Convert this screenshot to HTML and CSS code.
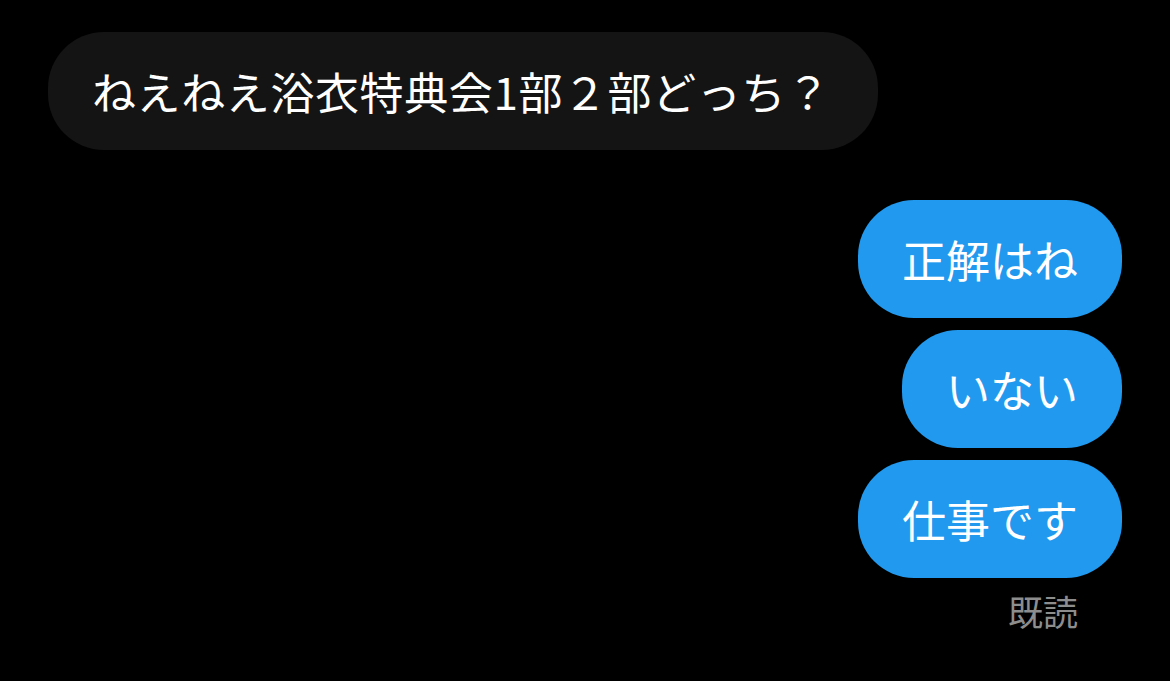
FILE: index.html
```html
<!DOCTYPE html>
<html lang="ja">
<head>
<meta charset="utf-8">
<link rel="stylesheet" href="styles.css">
</head>
<body>
<div class="chat">
  <div class="row row-in">
    <div class="bubble bubble-in">ねえねえ浴衣特典会1部２部どっち？</div>
  </div>
  <div class="group-out">
    <div class="bubble bubble-out">正解はね</div>
    <div class="bubble bubble-out">いない</div>
    <div class="bubble bubble-out">仕事です</div>
    <div class="read">既読</div>
  </div>
</div>
</body>
</html>
```
FILE: styles.css
```css
html, body {
  margin: 0;
  padding: 0;
  background: #000;
  width: 1170px;
  height: 681px;
  overflow: hidden;
}
.chat {
  padding: 32px 48px 0 48px;
  display: flex;
  flex-direction: column;
  font-family: "Noto Sans CJK JP", "Noto Sans", sans-serif;
  color: #fff;
}
.row-in {
  display: flex;
  justify-content: flex-start;
}
.bubble {
  height: 118px;
  box-sizing: border-box;
  display: flex;
  align-items: center;
  font-size: 44px;
  line-height: 1;
  border-radius: 56px;
  white-space: nowrap;
}
.bubble-in {
  background: #141414;
  padding: 0 47px 0 44px;
  letter-spacing: 0.6px;
}
.group-out {
  margin-top: 50px;
  display: flex;
  flex-direction: column;
  align-items: flex-end;
  gap: 12px;
}
.bubble-out {
  background: #2199ee;
  padding: 0 44px;
}
.read {
  margin-top: 0;
  margin-right: 44px;
  font-size: 35px;
  line-height: 1.2;
  color: #8d8d8d;
}
```
